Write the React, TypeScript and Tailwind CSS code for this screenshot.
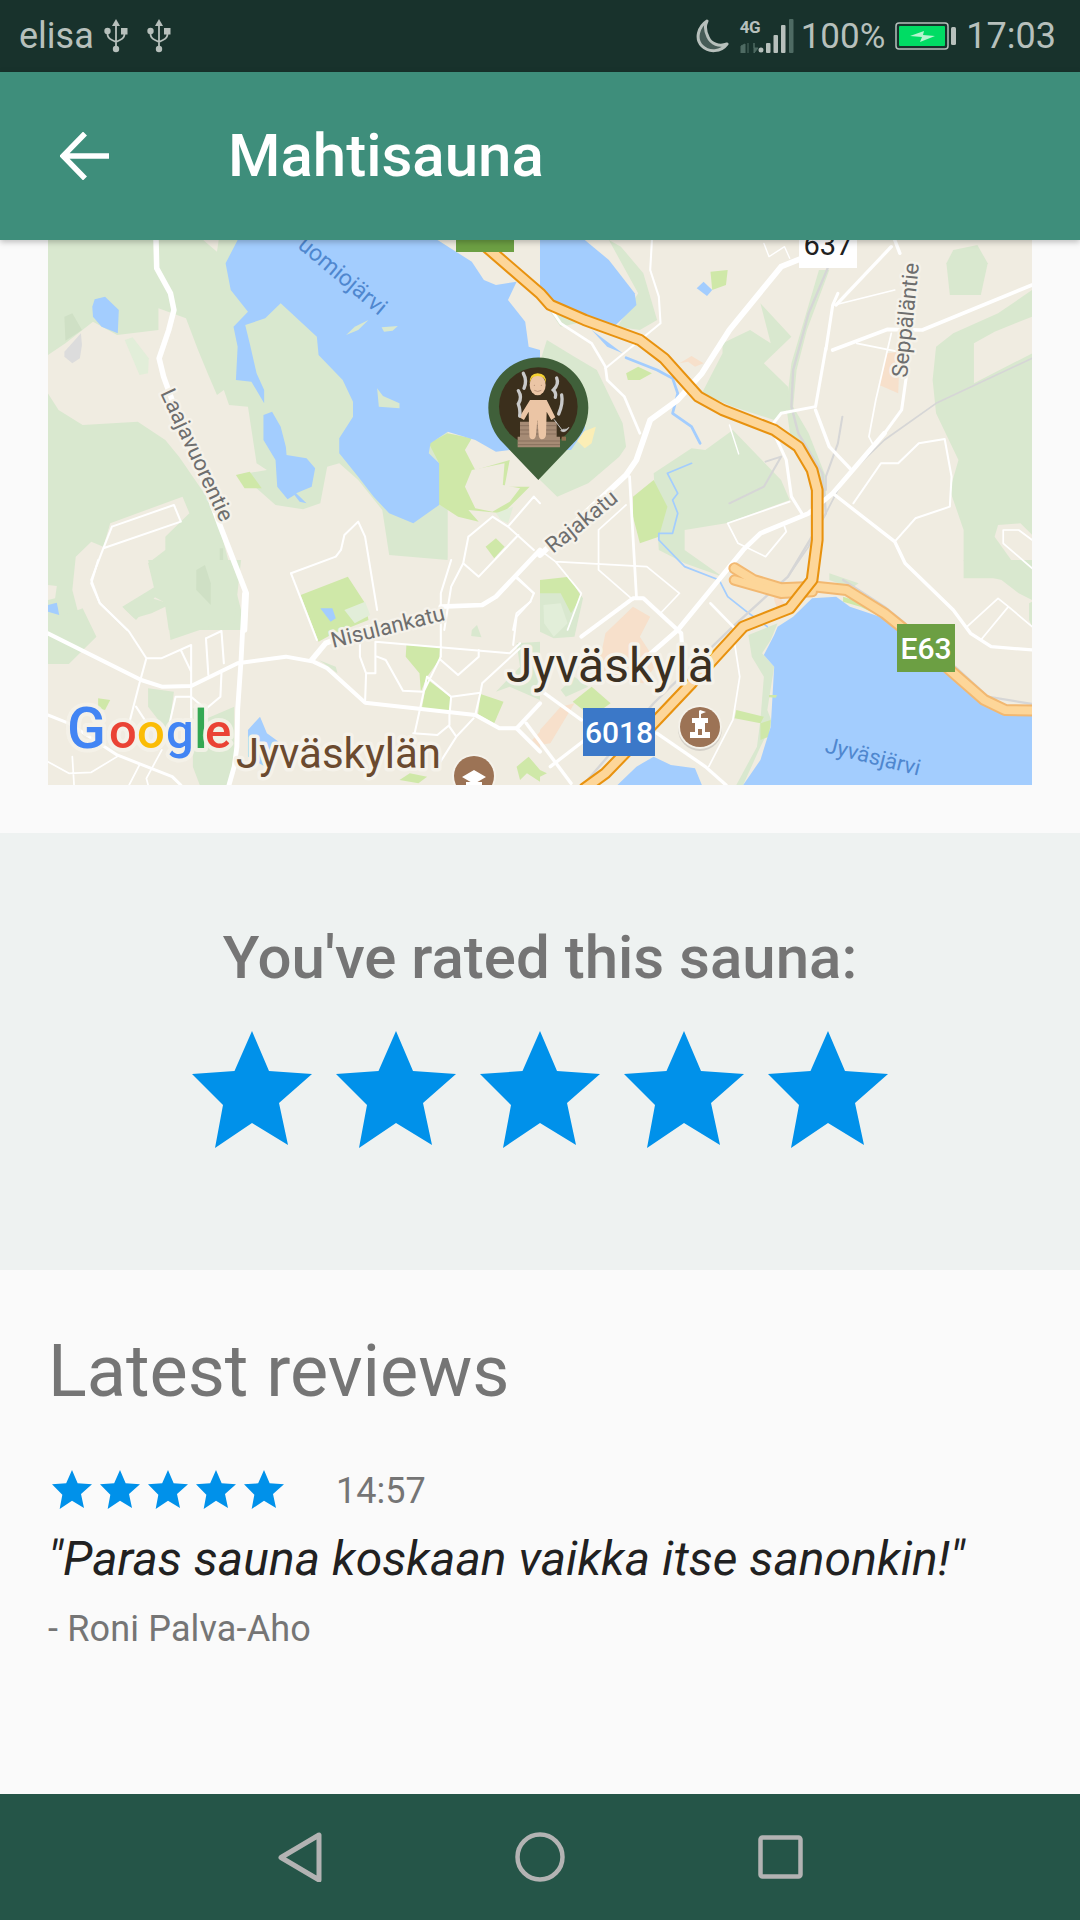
import React from "react";

// transforms from the crop coordinates used while tracing the map
const A = "translate(0 230) scale(.3444 .3333)";
const B = "translate(540 230) scale(.3444 .3333)";
const C = "translate(0 560) scale(.3444 .3333)";
const D = "translate(540 560) scale(.3444 .3333)";

const LAND = "#f0ece1";
const GREEN = "#d9e8cf";
const PARK = "#cfe8a8";
const WATER = "#a3cdfe";
const URBAN = "#f7e0cb";

const areas: [string, string, string][] = [
  // green around the lake
  [A, GREEN, "M139 30 H1300 V1000 H1130 L700 1200 H139 Z"],
  [A, LAND, "M139 375 L190 340 L270 275 L340 315 L460 300 L460 235 L540 265 L575 360 L605 435 L630 495 L650 480 L665 525 L720 530 L745 700 L775 720 L690 735 L745 775 L800 825 L880 838 L930 820 L950 710 L985 700 L1040 750 L1110 840 L1130 975 L1300 990 L1310 870 L1390 870 L1430 700 L1568 660 V1200 H715 L640 900 L600 800 L520 680 L480 630 L400 575 L240 585 L170 540 L139 490 Z"],
  [A, LAND, "M320 880 L530 800 L550 850 L480 920 L480 960 L430 1000 L450 1085 L475 1115 L440 1105 L410 1130 L360 1135 L390 1165 L440 1150 L480 1130 L490 1200 L240 1200 L210 1080 L220 980 L265 935 L300 950 Z"],
  [A, LAND, "M1270 30 H1568 V200 L1500 155 L1440 165 L1405 150 L1370 95 Z"],
  [A, LAND, "M590 30 L635 30 L630 65 Z"],
  [A, LAND, "M139 1065 L165 1068 L160 1105 L139 1110 Z"],
  [A, "#cfe0c5", "M187 260 L210 250 L238 300 L190 332 Z"],
  [A, "#cfe0c5", "M570 1010 L595 1000 L612 1060 L612 1125 L570 1080 Z"],
  [A, "#cfe0c5", "M638 955 L648 955 L648 1080 L638 1080 Z"],
  [A, "#e2eed9", "M362 330 L385 322 L432 385 L430 430 L405 435 Z"],
  [A, "#dcdcdc", "M187 365 L235 310 L238 345 L232 385 L210 400 L187 380 Z"],
  [A, PARK, "M685 735 L725 725 L760 775 L710 775 Z"],
  [A, PARK, "M1245 640 L1300 610 L1370 625 L1350 660 L1380 720 L1480 690 L1465 770 L1538 770 L1490 820 L1460 850 L1360 840 L1390 875 L1330 860 L1270 820 L1275 700 Z"],
  [A, LAND, "M1350 770 L1370 720 L1465 700 L1460 765 L1510 775 L1480 815 L1430 845 L1380 835 Z"],
  [A, PARK, "M1410 950 L1440 925 L1465 950 L1435 985 Z"],
  [A, "#e2eed9", "M1440 850 L1490 830 L1475 880 L1455 870 Z"],

  // lower left
  [C, GREEN, "M139 170 L175 170 L240 145 L280 230 L200 312 L139 312 Z"],
  [C, GREEN, "M430 0 L450 80 L355 140 L395 180 L450 112 L482 130 L495 240 L650 185 L680 190 L700 0 Z"],
  [C, "#cfe0c5", "M570 30 L595 15 L612 70 L612 135 L570 90 Z"],
  [C, PARK, "M873 105 L1010 50 L1060 130 L1070 180 L960 225 L925 245 Z"],
  [C, "#e2eed9", "M1000 150 L1060 125 L1075 165 L1030 190 Z"],
  [C, PARK, "M1180 255 L1278 262 L1275 300 L1240 350 L1222 395 L1218 340 L1178 290 Z"],
  [C, PARK, "M1240 358 L1308 412 L1305 460 L1225 445 Z"],
  [C, PARK, "M1395 402 L1462 425 L1435 490 L1388 462 Z"],
  [C, GREEN, "M1500 250 L1568 245 V420 L1480 380 L1440 395 L1510 320 Z"],
  [C, GREEN, "M1370 210 L1385 195 L1398 232 L1368 228 Z"],
  [C, GREEN, "M430 385 L505 395 L490 510 L460 480 L430 440 Z"],
  [C, GREEN, "M560 445 L590 445 L590 480 L680 440 L680 620 L660 675 L580 675 L560 620 Z"],
  [C, GREEN, "M925 300 L975 320 L980 340 L940 310 Z"],
  [C, PARK, "M285 415 L320 420 L305 450 L285 445 Z"],
  [C, PARK, "M1160 660 L1190 640 L1240 650 L1215 670 Z"],
  [C, PARK, "M1500 620 L1535 590 L1568 630 V665 L1530 640 L1510 660 Z"],
  [C, URBAN, "M1545 540 L1568 515 V565 Z"],

  // right side
  [B, GREEN, "M0 395 L20 330 L100 380 L165 420 L240 580 L250 650 L230 680 L140 760 L50 800 L0 750 Z"],
  [B, GREEN, "M0 155 L40 155 L70 190 L100 170 L170 235 L150 270 L60 290 L0 200 Z"],
  [B, GREEN, "M200 30 L235 50 L300 130 L340 270 L290 300 L225 290 L285 190 Z"],
  [B, GREEN, "M530 340 L610 300 L670 340 L640 220 L730 320 L650 400 L720 470 L730 530 L680 570 L560 530 L470 490 L530 370 Z"],
  [B, GREEN, "M810 120 L840 120 L775 300 L745 420 L735 530 L780 610 L830 740 L830 830 L790 760 L730 640 L715 530 L730 400 Z"],
  [B, GREEN, "M330 730 L440 655 L480 660 L560 600 L700 750 L725 810 L540 880 L420 900 L420 960 L530 1040 L420 1000 L345 960 Z"],
  [B, PARK, "M270 800 L330 750 L370 830 L345 920 L290 940 L270 860 Z"],
  [B, PARK, "M495 125 L545 120 L540 165 L500 180 Z"],
  [B, PARK, "M250 430 L285 410 L325 430 L290 450 L255 450 Z"],
  [B, GREEN, "M1180 100 L1200 60 L1270 45 L1300 100 L1280 195 L1190 195 Z"],
  [B, GREEN, "M1150 350 L1200 310 L1330 250 L1429 180 V1045 H1230 L1230 900 L1190 780 L1215 690 L1150 550 L1140 450 Z"],
  [B, LAND, "M1260 340 L1320 305 L1429 260 V370 L1260 460 Z"],
  [B, LAND, "M1330 885 L1395 880 L1429 915 V1045 L1375 1000 L1320 920 Z"],
  [B, URBAN, "M1005 370 L1045 365 L1040 490 L985 465 Z"],
  [B, URBAN, "M405 400 L440 378 L475 400 L450 410 L430 395 Z"],
  [B, "#fbeeb6", "M125 605 L162 590 L150 640 L130 655 L105 630 Z"],

  // centre and lakeside
  [D, GREEN, "M0 90 L90 70 L125 115 L100 230 L40 235 L0 215 Z"],
  [D, "#e2eed9", "M10 135 L60 130 L80 190 L40 230 L12 190 Z"],
  [D, PARK, "M0 60 L85 50 L120 110 L90 160 L60 100 L0 100 Z"],
  [D, URBAN, "M190 220 L270 140 L320 170 L290 230 L340 310 L300 370 L230 360 L150 330 L180 270 Z"],
  [D, URBAN, "M0 510 L60 440 L100 430 L30 550 L0 555 Z"],
  [D, PARK, "M95 425 L150 380 L205 430 L150 470 Z"],
  [D, GREEN, "M60 390 L100 350 L140 380 L75 410 Z"],
  [D, PARK, "M0 630 L20 640 L0 650 Z"],
  [D, GREEN, "M605 225 L690 190 L670 240 L645 280 L680 320 L660 450 L675 490 L640 560 L590 675 L570 675 L630 560 L640 480 L650 350 L615 290 Z"],
  [D, PARK, "M570 450 L650 470 L640 490 L565 475 Z"],
  [D, PARK, "M640 490 L670 480 L665 530 L640 540 Z"],
  [D, URBAN, "M680 90 L710 130 L690 150 L680 120 Z"],
  [D, GREEN, "M840 40 L925 70 L905 85 L840 60 Z"],
  [D, PARK, "M880 110 L940 130 L1000 175 L930 140 L880 125 Z"],
  [D, GREEN, "M1230 0 H1429 V120 L1390 100 L1340 60 L1300 50 L1240 40 Z"],
  [D, GREEN, "M1420 130 L1429 125 V200 L1420 180 Z"],
  [D, GREEN, "M1260 450 L1340 470 L1330 490 L1280 470 Z"],

  // water
  [A, WATER, "M655 100 L690 30 H1270 L1370 95 L1405 150 L1440 165 L1500 155 L1475 210 L1525 275 L1535 350 L1568 360 V650 L1440 665 L1380 630 L1300 605 L1250 640 L1245 670 L1275 700 L1275 825 L1200 880 L1130 850 L1085 800 L1040 740 L985 670 L985 625 L1025 560 L1025 515 L995 450 L925 375 L920 320 L815 220 L770 265 L712 285 L725 340 L745 430 L767 480 L767 520 L730 455 L685 450 L690 350 L678 290 L720 245 L670 180 Z"],
  [A, WATER, "M765 555 L790 545 L815 590 L830 650 L832 675 L890 685 L915 715 L905 770 L860 790 L890 820 L870 815 L855 795 L835 808 L805 770 L800 690 L765 630 Z"],
  [A, WATER, "M268 230 L275 208 L305 200 L345 240 L342 310 L295 290 L270 260 Z"],
  [A, GREEN, "M1005 315 L1030 290 L1070 270 L1040 300 Z"],
  [A, GREEN, "M1108 292 L1155 288 L1140 302 L1115 305 Z"],
  [A, GREEN, "M1095 475 L1112 498 L1160 520 L1160 535 L1100 530 Z"],
  [C, WATER, "M139 135 L165 128 L172 165 L139 155 Z"],
  [C, WATER, "M930 145 L965 145 L975 175 L960 185 Z"],
  [C, WATER, "M720 510 L755 470 L775 520 L815 550 L770 620 L720 590 Z"],
  [B, WATER, "M0 30 H130 L200 90 L275 190 L280 225 L220 285 L130 265 L20 205 L0 170 Z"],
  [B, WATER, "M150 300 L240 370 L195 350 Z"],
  [B, WATER, "M0 400 L135 500 L130 600 L90 660 L0 660 Z"],
  [B, WATER, "M455 175 L475 155 L500 180 L485 198 Z"],
  [D, WATER, "M690 200 L735 170 L790 115 L860 110 L900 140 L1000 175 L1040 210 L1205 340 L1280 420 L1360 465 L1429 465 V675 H590 L640 600 L670 500 L680 320 L650 285 L680 225 Z"],
  [D, WATER, "M225 675 L280 620 L330 590 L380 615 L450 625 L470 675 Z"],
  [D, PARK, "M665 405 L688 405 L685 413 L665 412 Z"],
];

// [transform, width, path]
const rivers: [string, number, string][] = [
  [B, 8, "M250 383 L340 420 L385 445 L400 490 L385 550 L440 590 L465 640"],
  [B, 5, "M440 700 L370 730 L400 790 L385 810 L400 850 L385 910 L345 910 L345 930 L420 1010 L520 1050 L545 1100 L600 1145 L660 1190"],
];

const rail: [string, number, string][] = [
  [B, 7, "M835 115 L780 250 L735 420 L730 530 L750 610 L820 730 L830 850 L720 1040 L560 1190 L480 1270 L330 1420 L130 1660"],
  [B, 6, "M655 695 L700 680 L650 770 L550 820"],
  [B, 6, "M878 560 L865 640 L830 740 L830 780"],
  [B, 5, "M1429 385 L1150 520 L1000 630 L880 750 L780 950 L720 1040"],
  [D, 7, "M880 60 L1000 140 L1060 190"],
  [D, 7, "M1205 320 L1300 410 L1429 432"],
];

const roads: [string, number, string][] = [
  // left side
  [A, 16, "M453 30 L455 115 L495 190 L505 240 L490 300 L462 385 L475 440 L510 540 L580 720 L640 890 L715 1090 L710 1200"],
  [A, 6, "M325 890 L505 825 L525 875 L300 955 M325 890 L300 955 L265 1050 L290 1120 L370 1200"],
  [A, 6, "M845 1030 L975 980 L990 960 L1000 915 L1040 875 L1060 920 L1095 1140"],
  [A, 14, "M1280 1130 L1400 1125 L1440 1100 L1568 960"],
  [A, 6, "M1360 920 L1430 860 L1475 890 L1550 960 M1360 920 L1345 1000 L1390 1040 L1505 915 M1345 1000 L1310 1070 L1290 1200 M1475 890 L1550 800 L1568 820 M1500 1040 L1550 1090 M1540 1115 L1500 1150 L1490 1200"],
  [C, 6, "M845 40 L920 240"],
  [C, 12, "M139 220 L410 360 L470 380 L555 378 L690 310 L830 290 L910 305 L950 325 L1060 428 L1380 465 L1450 505 L1500 505"],
  [C, 16, "M905 300 L945 250 L1060 205 L1280 155"],
  [C, 14, "M710 100 L700 300 L690 450 L688 560 L680 620 L665 675"],
  [C, 6, "M425 295 L468 295 L555 255 L555 500 M425 295 L375 215 L290 130 L265 70 L285 0 M425 295 L405 370 L370 510 M525 270 L555 335 M598 235 L643 213 L650 310 M598 235 L605 345 M643 340 L640 410 L600 445 M510 410 L555 410 L600 450 M510 410 L490 500 M395 440 L430 495"],
  [C, 9, "M139 465 L200 490 L340 585 L500 650 L525 675"],
  [C, 5, "M139 605 L200 640 L265 637 L340 590 M210 590 L215 675 M405 615 L375 675 M470 570 L425 655 L430 675"],
  [C, 6, "M1090 245 L1480 280 L1510 250 M1090 245 L1090 340 L1063 340 L1045 290 L1045 240 M1063 340 L1060 428 M1095 290 L1120 300 L1170 392 L1230 395 L1280 290 L1280 100 L1310 0 M1280 300 L1330 345 L1390 290 L1390 270 M1240 350 L1310 410 L1395 398 L1400 370 L1510 265 M1310 410 L1305 465 L1305 495 L1270 525 L1200 520 M1240 350 L1205 515 M1395 398 L1380 465 M1305 500 L1325 530 L1375 475 M1325 530 L1270 620"],
  [C, 12, "M1500 505 L1568 575 M1500 505 L1568 430"],
  [C, 6, "M1500 55 L1550 100 L1540 125 L1500 170 L1490 255"],

  // right side
  [B, 17, "M0 975 L250 735 L280 690 L320 570 L400 510 L470 430 L550 300 L700 110 L760 85"],
  [B, 10, "M860 225 L1020 50 M1030 30 L1045 70"],
  [B, 11, "M850 360 L1010 298 L1110 300 L1429 165"],
  [B, 9, "M830 360 L850 225 L865 190"],
  [B, 5, "M855 225 L1030 180 M920 340 L1040 365 M1020 310 L975 510 L955 620 L965 640"],
  [B, 9, "M830 355 L800 530 L700 550 L670 590 L715 690 L730 800 L760 850"],
  [B, 10, "M800 540 L840 650 L900 715"],
  [B, 9, "M1065 430 L1050 540 L1000 610"],
  [B, 14, "M1000 610 L850 790 L780 850 L640 910 L590 960 L400 1200 L300 1290"],
  [B, 10, "M850 790 L1030 935 L1060 1000 L1200 1140 L1250 1210 L1310 1250 L1429 1260"],
  [B, 6, "M910 820 L990 700 L1040 700 L1100 640 L1175 627 L1195 740 L1190 830 L1090 865 L1030 935"],
  [B, 5, "M1429 930 L1390 900 L1345 900 L1345 940 L1429 1015"],
  [B, 8, "M0 190 L60 280 L150 340 L190 410 L195 450 L245 500 L290 610"],
  [B, 6, "M190 415 L350 280 L345 200 L320 120 L325 30"],
  [B, 5, "M545 880 L725 815 M545 880 L575 940 L655 980 L715 905 L710 890"],
  [B, 8, "M260 740 L280 1100"],
  [B, 5, "M170 900 L250 825 M170 900 L170 1020 L270 1110 M45 995 L310 1010 L405 1090 L350 1150 M45 995 L120 1090 L80 1200 M0 960 L45 995"],
  [B, 4, "M650 40 L665 80 L710 50 L725 85 M550 585 L577 672"],
  [B, 12, "M120 1220 L270 1105 L300 1105 L410 1210 L415 1290 M270 1110"],
  [B, 8, "M495 1120 L570 1200"],
  [B, 5, "M565 1240 L580 1340 L560 1470 L490 1610"],
  [B, 10, "M340 1510 L480 1610 L540 1665"],
  [B, 10, "M0 1380 L120 1470 M30 1610 L130 1530"],
  [B, 10, "M-40 1480 L90 1660"],
  [B, 5, "M1240 1190 L1330 1105 L1360 1130 L1280 1230 M1360 1130 L1429 1190"],
];

const MOTORWAY = "M-168 40 L0 190 L30 225 L130 270 L290 330 L360 385 L460 500 L530 540 L680 600 L750 650 L790 720 L805 780 L805 930 L790 1050 L725 1135 L590 1190 L510 1280 L440 1360 L330 1480 L190 1630 L130 1675";
const RAMP = "M565 1015 L620 1050 L700 1075 L800 1070 L890 1080 L1000 1150 L1060 1200 L1190 1320 L1290 1410 L1350 1440 L1429 1442";
const RAMP_2 = "M565 1050 L700 1090 L790 1085";

const Map = () => (
  <svg viewBox="48 240 984 545" className="block h-full w-full">
    <rect x="48" y="240" width="984" height="545" fill={LAND} />
    {areas.map(([t, fill, d], i) => (
      <path key={i} transform={t} d={d} fill={fill} />
    ))}
    <g fill="none" strokeLinecap="round" strokeLinejoin="round">
      {rivers.map(([t, w, d], i) => (
        <path key={i} transform={t} d={d} stroke={WATER} strokeWidth={w} />
      ))}
      {rail.map(([t, w, d], i) => (
        <path key={i} transform={t} d={d} stroke="#d6d6d6" strokeWidth={w} />
      ))}
      {roads.map(([t, w, d], i) => (
        <path key={i} transform={t} d={d} stroke="#ffffff" strokeWidth={w} />
      ))}
      <g transform={B}>
        <path d={RAMP} stroke="#f2b871" strokeWidth="36" />
        <path d={RAMP_2} stroke="#f2b871" strokeWidth="34" />
        <path d={RAMP} stroke="#fdd699" strokeWidth="24" />
        <path d={RAMP_2} stroke="#fdd699" strokeWidth="22" />
        <path d={MOTORWAY} stroke="#e8920f" strokeWidth="37" />
        <path d={MOTORWAY} stroke="#fdd699" strokeWidth="25" />
      </g>
    </g>

    {/* road signs */}
    <rect x="456" y="240" width="58" height="12" fill="#6c9f43" />
    <rect x="799" y="240" width="58" height="28" fill="#ffffff" />
    <text x="828" y="255" textAnchor="middle" fontSize="29" fill="#212121">637</text>
    <rect x="897" y="624" width="58" height="48" fill="#6c9f43" />
    <text x="926" y="659" textAnchor="middle" fontSize="30" fontWeight="500" fill="#ffffff">E63</text>
    <rect x="583" y="708" width="72" height="48" fill="#3b78c8" />
    <text x="619" y="743" textAnchor="middle" fontSize="30" fontWeight="500" fill="#ffffff">6018</text>

    {/* place names */}
    <g fontSize="22" fill="#6e6e6e" stroke="#f5f2ea" strokeWidth="5" paintOrder="stroke" strokeLinejoin="round">
      <text transform="translate(160 393) rotate(65)">Laajavuorentie</text>
      <text transform="translate(333 648) rotate(-14)">Nisulankatu</text>
      <text transform="translate(553 554) rotate(-39)">Rajakatu</text>
      <text transform="translate(907 378) rotate(-84)">Seppäläntie</text>
    </g>
    <text transform="translate(379 316) rotate(40)" textAnchor="end" fontSize="23" fill="#4f87cf">uomiojärvi</text>
    <text transform="translate(824 752) rotate(14)" fontSize="22" fill="#4f87cf">Jyväsjärvi</text>
    <text x="506" y="682" fontSize="48" fill="#3b3022" stroke="#f5f2ea" strokeWidth="7" paintOrder="stroke" strokeLinejoin="round">Jyväskylä</text>
    <text x="236" y="768" fontSize="42" fill="#6b4a2f" stroke="#f5f2ea" strokeWidth="7" paintOrder="stroke" strokeLinejoin="round">Jyväskylän</text>

    {/* places */}
    <circle cx="474" cy="776" r="22" fill="#f5f2ea" />
    <circle cx="474" cy="776" r="20" fill="#9c7355" />
    <path d="M462 777 L474 770 L486 777 L474 784 Z M466 782 H482 V785 H466 Z" fill="#ffffff" />
    <circle cx="700" cy="729" r="22" fill="#d4d0c8" />
    <circle cx="700" cy="727" r="22" fill="#f5f2ea" />
    <circle cx="700" cy="727" r="20" fill="#9c7355" />
    <path d="M692 718 H708 V723 H705 V732 H710 V738 H690 V732 H695 V723 H692 Z M699 711 V718 H701 V714 L706 712 L700 710 Z" fill="#ffffff" />
    <rect x="698" y="729" width="4" height="6" fill="#9c7355" />

    {/* google */}
    <text y="748" fontSize="49" fontWeight="500" stroke="#f5f2ea" strokeOpacity=".8" strokeWidth="8" paintOrder="stroke" strokeLinejoin="round">
      <tspan x="67" fontSize="57" fill="#4285f4">G</tspan>
      <tspan x="109" fill="#ea4335">o</tspan>
      <tspan x="137" fill="#fbbc05">o</tspan>
      <tspan x="166" fill="#4285f4">g</tspan>
      <tspan x="194" fontSize="54" fill="#34a853">l</tspan>
      <tspan x="205" fill="#ea4335">e</tspan>
    </text>

    {/* sauna pin */}
    <g transform="translate(450 340) scale(.3333)">
      <path d="M265 420 L160 310 A150 150 0 1 1 370 310 Z" fill="#40603a" />
      <circle cx="265" cy="200" r="118" fill="#3b2f1c" />
      <path d="M203 290 H330 V322 H203 Z" fill="#a68b75" />
      <path d="M210 245 H320 V292 H210 Z" fill="#a68b75" />
      <path d="M210 257 H320 M210 270 H320 M210 282 H320 M203 303 H330 M203 314 H330" stroke="#7c6553" strokeWidth="2" />
      <path d="M335 290 H348 V302 H335 Z" fill="#8f6f4f" />
      <path d="M240 180 L290 180 L316 232 L304 240 L290 215 L288 285 Q286 298 275 298 Q268 298 266 285 L262 240 L258 285 Q256 298 248 298 Q238 298 238 285 L236 215 L222 240 L208 232 Z" fill="#ebc5a5" />
      <ellipse cx="263" cy="135" rx="24" ry="31" fill="#ebc5a5" />
      <path d="M239 130 Q238 100 263 100 Q290 100 288 130 Q285 108 263 108 Q242 108 239 130 Z" fill="#f5d130" />
      <path d="M253 151 Q263 158 274 151" stroke="#a9806a" strokeWidth="2" fill="none" />
      <circle cx="253" cy="136" r="1.6" fill="#a9806a" />
      <circle cx="274" cy="136" r="1.6" fill="#a9806a" />
      <g fill="none" stroke="#c9c9c9" strokeWidth="10" strokeLinecap="round">
        <path d="M220 100 Q232 122 222 145" />
        <path d="M205 152 Q218 172 205 192 Q212 212 209 228" />
        <path d="M320 114 Q328 132 310 150 Q320 160 316 172" />
        <path d="M335 165 Q340 190 326 222" />
      </g>
      <path d="M312 238 L340 275" stroke="#c9c9c9" strokeWidth="3" />
      <path d="M332 272 Q345 282 357 262 Q350 270 340 268 Z" fill="#c9c9c9" stroke="#c9c9c9" strokeWidth="2" />
    </g>
  </svg>
);

const Star = ({ className }: { className: string }) => (
  <svg viewBox="0 0 120 117" className={className}>
    <path d="M60 0 L77 40 L120 43 L87 72 L96 114 L60 92 L23 117 L31 74 L0 43 L42.5 40 Z" fill="#0091ea" />
  </svg>
);

const UsbIcon = () => (
  <svg viewBox="0 0 24 34" className="h-[34px] w-6">
    <g fill="#b7c0bc">
      <path d="M12 0 L16 7 H8 Z" />
      <circle cx="12" cy="30" r="3.2" />
      <circle cx="3.5" cy="12" r="3.2" />
      <rect x="17" y="9" width="6.5" height="6.5" />
    </g>
    <path d="M12 6 V28 M3.5 13 V15 Q3.5 19 8 21 L12 23 M20.5 14 V15 Q20.5 19 16 21 L12 23" stroke="#b7c0bc" strokeWidth="1.8" fill="none" />
  </svg>
);

const StatusBar = () => (
  <div className="flex h-[72px] shrink-0 items-center bg-[#18322c] pl-[19px] pr-6 text-[#b7c0bc]">
    <span className="text-[36px] leading-none">elisa</span>
    <div className="ml-[10px] flex gap-[19px]">
      <UsbIcon />
      <UsbIcon />
    </div>
    <svg viewBox="0 0 34 34" className="ml-auto h-[34px] w-[34px]">
      <path d="M12 2 C3 8 0 20 7 27 C14 34 26 33 32 25 C24 28 16 25 13 18 C10 12 10 6 12 2 Z" fill="#b7c0bc" fillOpacity=".3" stroke="#b7c0bc" strokeWidth="3" strokeLinejoin="round" />
    </svg>
    <div className="relative ml-[11px] h-[34px] w-[54px]">
      <span className="absolute left-0 top-[-1px] text-[17px] font-bold leading-[18px] tracking-tight">4G</span>
      <svg viewBox="0 0 54 34" className="h-full w-full">
        <path d="M1 34 V27 L5 25 V34 Z M8 24 V34 M14 24 V34 L18 29 H14 Z" fill="#4e6b63" stroke="#4e6b63" strokeWidth="1" />
        <circle cx="21" cy="31" r="2.5" fill="#b7c0bc" />
        <rect x="26" y="24" width="4.5" height="10" rx="1" fill="#b7c0bc" />
        <rect x="33.5" y="16" width="4.5" height="18" rx="1" fill="#b7c0bc" />
        <rect x="41" y="6" width="4.5" height="28" rx="1" fill="#b7c0bc" />
        <rect x="49" y="0" width="4.5" height="34" rx="1" fill="#4e6b63" />
      </svg>
    </div>
    <span className="ml-[7px] text-[35px] leading-none">100%</span>
    <svg viewBox="0 0 62 28" className="ml-[10px] h-7 w-[62px]">
      <rect x="1" y="1" width="52" height="26" rx="3" fill="none" stroke="#b7c0bc" strokeWidth="1.5" />
      <rect x="4" y="4" width="46" height="20" rx="1" fill="#00dc64" />
      <rect x="56" y="5" width="5" height="18" rx="1.5" fill="#b7c0bc" />
      <path d="M15 14 L29 9 L28 13 L40 14 L25 20 L27 15 Z" fill="#b5f5cf" />
    </svg>
    <span className="ml-[9px] text-[36px] leading-none">17:03</span>
  </div>
);

const AppBar = () => (
  <div className="relative z-10 flex h-[168px] shrink-0 items-center bg-[#3e8e7b] pl-[60px] shadow-[0_2px_6px_rgba(0,0,0,0.25)]">
    <svg viewBox="0 0 50 48" className="h-12 w-[50px]">
      <path d="M25 1.5 L3 24 L25 46.5 M3 24 H49" fill="none" stroke="#ffffff" strokeWidth="5.5" />
    </svg>
    <h1 className="ml-[118px] text-[60px] font-medium leading-none text-white">Mahtisauna</h1>
  </div>
);

const NavBar = () => (
  <div className="mt-auto flex h-[126px] shrink-0 items-start justify-center gap-[190px] bg-[#255548] pt-[38px]">
    <svg viewBox="0 0 50 50" className="h-[50px] w-[50px]">
      <path d="M44 3 L44 48 L6 25.5 Z" fill="none" stroke="#b3b3b3" strokeWidth="5" strokeLinejoin="round" />
    </svg>
    <svg viewBox="0 0 50 50" className="h-[50px] w-[50px]">
      <circle cx="25" cy="25" r="22.5" fill="none" stroke="#b3b3b3" strokeWidth="4.5" />
    </svg>
    <svg viewBox="0 0 50 50" className="h-[50px] w-[50px]">
      <rect x="5.5" y="5.5" width="40" height="39" rx="2" fill="none" stroke="#b3b3b3" strokeWidth="4.5" />
    </svg>
  </div>
);

export default function App() {
  return (
    <div className="flex h-[1920px] w-[1080px] flex-col overflow-hidden bg-[#fafafa] [font-family:Roboto,sans-serif]">
      <StatusBar />
      <AppBar />
      <div className="mx-12 h-[545px] shrink-0">
        <Map />
      </div>
      <section className="mt-12 flex h-[437px] shrink-0 flex-col items-center bg-[#eef2f1] pt-[89px]">
        <h2 className="text-[60px] font-medium leading-[72px] text-[#757575]">You've rated this sauna:</h2>
        <div className="mt-[37px] flex gap-6">
          {[0, 1, 2, 3, 4].map((i) => (
            <Star key={i} className="h-[117px] w-[120px]" />
          ))}
        </div>
      </section>
      <section className="px-12 pt-[59px]">
        <h2 className="text-[72px] leading-[86px] text-[#757575]">Latest reviews</h2>
        <div className="mt-[51px] flex items-center">
          <div className="ml-1 flex gap-2">
            {[0, 1, 2, 3, 4].map((i) => (
              <Star key={i} className="h-[39px] w-10" />
            ))}
          </div>
          <span className="ml-[52px] mt-1 text-[36px] leading-[42px] text-[#757575]">14:57</span>
        </div>
        <p className="mt-[15px] text-[48px] italic leading-[64px] tracking-[0.06px] text-[#212121]">"Paras sauna koskaan vaikka itse sanonkin!"</p>
        <p className="mt-[17px] text-[36px] leading-[42px] tracking-[0.15px] text-[#757575]">- Roni Palva-Aho</p>
      </section>
      <NavBar />
    </div>
  );
}
